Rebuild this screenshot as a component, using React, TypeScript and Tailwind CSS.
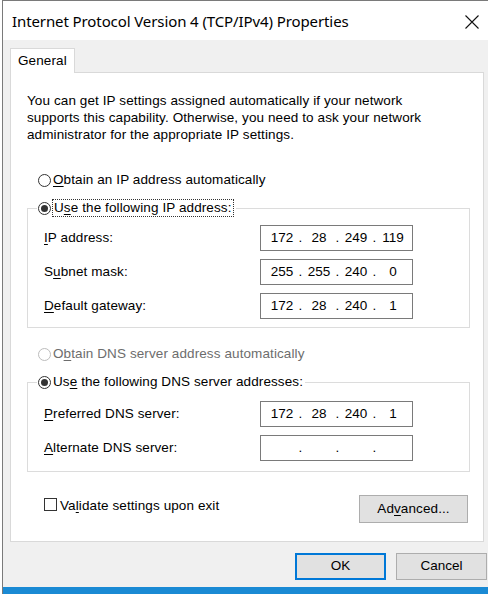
import React from 'react';

const UI_FONT = "font-['Liberation_Sans',Arial,sans-serif]";

const Radio: React.FC<{ checked?: boolean; disabled?: boolean }> = ({ checked, disabled }) => (
  <span
    className={`w-[13px] h-[13px] rounded-full border bg-white flex items-center justify-center shrink-0 ${
      disabled ? 'border-[#bcbcbc]' : 'border-[#333333]'
    }`}
  >
    {checked && <span className="w-[7px] h-[7px] rounded-full bg-[#333333]" />}
  </span>
);

const IpBox: React.FC<{ octets: string[] }> = ({ octets }) => (
  <div className="w-[153px] h-[26px] border border-[#7a7a7a] bg-white flex items-center pl-[9px] text-[13.5px] tracking-normal text-black">
    {octets.map((o, i) => (
      <React.Fragment key={i}>
        <span className="w-[24px] text-center">{o}</span>
        {i < 3 && <span className="w-[13px] text-center">.</span>}
      </React.Fragment>
    ))}
  </div>
);

const Row: React.FC<{ label: React.ReactNode; octets: string[] }> = ({ label, octets }) => (
  <div className="flex items-center">
    <span className="w-[216px]">{label}</span>
    <IpBox octets={octets} />
  </div>
);

const U: React.FC<{ children: React.ReactNode }> = ({ children }) => (
  <span className="underline underline-offset-2">{children}</span>
);

export default function App() {
  return (
    <div className={`w-[488px] h-[594px] bg-white overflow-hidden ${UI_FONT}`}>
      <div className="ml-[2px] h-[594px] border-l border-t border-[#7a7a7a] flex flex-col bg-[#f0f0f0]">
        {/* title bar */}
        <div className="h-[39px] bg-white flex items-center justify-between pl-[9px] pr-[9px] shrink-0">
          <span className="font-['Noto_Sans',sans-serif] text-[15px] text-black tracking-[-0.1px] mt-[1px]">
            Internet Protocol Version 4 (TCP/IPv4) Properties
          </span>
          <svg width="14" height="14" viewBox="0 0 14 14" className="mt-[2px]">
            <path d="M0.5 0.5 L13.5 13.5 M13.5 0.5 L0.5 13.5" stroke="#111" strokeWidth="1.1" fill="none" />
          </svg>
        </div>

        {/* tabs */}
        <div className="pt-[8px] pl-[7px] pr-[4px] text-[13.5px] tracking-[0.1px] text-black">
          <div className="relative z-10 -mb-px w-[65px] h-[25px] bg-white border border-b-0 border-[#d9d9d9] flex items-center pl-[7px]">
            General
          </div>
          <div className="h-[470px] bg-white border border-[#d9d9d9] pl-[16px] pr-[13px] pt-[19px]">
            <p className="leading-[17px] pr-[40px]">
              You can get IP settings assigned automatically if your network supports this capability. Otherwise, you need to ask your network administrator for the appropriate IP settings.
            </p>

            <div className="mt-[28px] h-[18px] flex items-center pl-[11px] gap-[2px]">
              <Radio />
              <span>
                <U>O</U>btain an IP address automatically
              </span>
            </div>

            <fieldset className="mt-[10px] border border-[#dcdcdc] px-[9px] pt-[8px] pb-[8px]">
              <legend className="h-[18px] flex items-center pl-[1px] pr-[2px]">
                <Radio checked />
                <span className="ml-[1px] border border-dotted border-[#333] px-[1px] leading-[16px]">
                  U<U>s</U>e the following IP address:
                </span>
              </legend>
              <div className="pl-[7px] flex flex-col gap-[8px]">
                <Row label={<><U>I</U>P address:</>} octets={['172', '28', '249', '119']} />
                <Row label={<>S<U>u</U>bnet mask:</>} octets={['255', '255', '240', '0']} />
                <Row label={<><U>D</U>efault gateway:</>} octets={['172', '28', '240', '1']} />
              </div>
            </fieldset>

            <div className="mt-[17px] h-[18px] flex items-center pl-[11px] gap-[2px] text-[#6d6d6d]">
              <Radio disabled />
              <span>
                O<U>b</U>tain DNS server address automatically
              </span>
            </div>

            <fieldset className="mt-[10px] border border-[#dcdcdc] px-[9px] pt-[10px] pb-[10px]">
              <legend className="h-[18px] flex items-center pl-[1px] pr-[2px] gap-[2px]">
                <Radio checked />
                <span>
                  Us<U>e</U> the following DNS server addresses:
                </span>
              </legend>
              <div className="pl-[7px] flex flex-col gap-[8px]">
                <Row label={<><U>P</U>referred DNS server:</>} octets={['172', '28', '240', '1']} />
                <Row label={<><U>A</U>lternate DNS server:</>} octets={['', '', '', '']} />
              </div>
            </fieldset>

            <div className="mt-[23px] flex items-start justify-between pl-[17px] pr-[2px]">
              <div className="mt-[2px] flex items-center gap-[3px]">
                <span className="w-[13px] h-[13px] border border-[#333] bg-white" />
                <span className="leading-[13px] mt-[2px]">
                  Va<U>l</U>idate settings upon exit
                </span>
              </div>
              <button className="w-[109px] h-[28px] bg-[#e1e1e1] border border-[#adadad] flex items-center justify-center pt-[1px]">
                Ad<U>v</U>anced...
              </button>
            </div>
          </div>
        </div>

        {/* dialog buttons */}
        <div className="mt-[11px] flex justify-end gap-[10px] pr-[1px] text-[13.5px] text-black">
          <button className="w-[91px] h-[27px] bg-[#e1e1e1] border-2 border-[#0078d7] flex items-center justify-center">
            OK
          </button>
          <button className="w-[91px] h-[27px] bg-[#e1e1e1] border border-[#adadad] flex items-center justify-center">
            Cancel
          </button>
        </div>
        <div className="flex-1" />
        <div className="h-[7px] bg-[#1a8ad4]" />
      </div>
    </div>
  );
}
